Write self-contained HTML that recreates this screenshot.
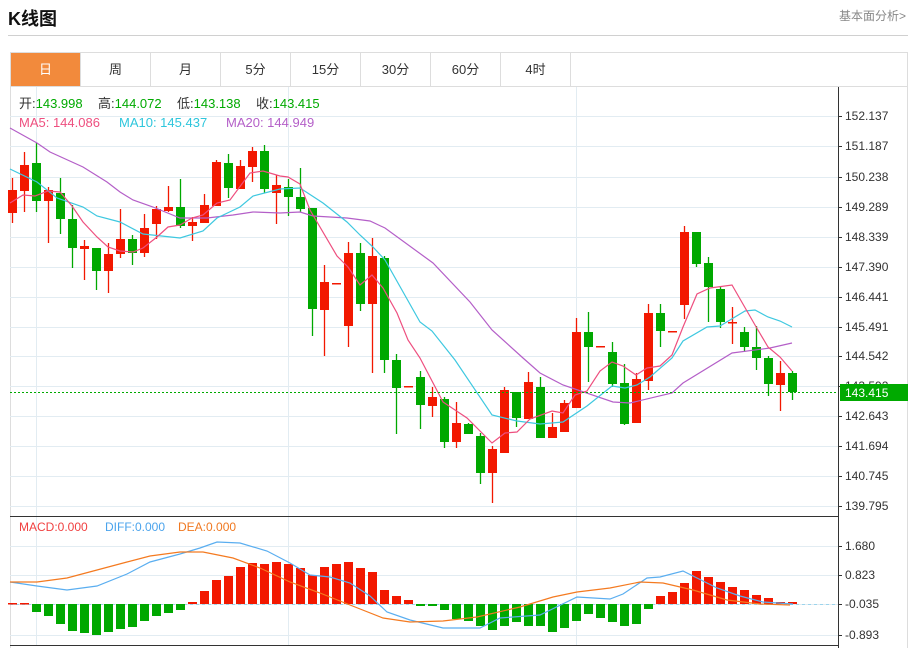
<!DOCTYPE html>
<html><head><meta charset="utf-8"><style>
body{margin:0;width:914px;height:648px;background:#fff;font-family:"Liberation Sans","Noto Sans CJK SC",sans-serif;overflow:hidden;position:relative}
.t{position:absolute;left:8px;top:5px;font-size:18px;font-weight:bold;color:#111}
.r{position:absolute;right:8px;top:7px;font-size:12px;color:#888}
.hr{position:absolute;left:8px;right:6px;top:35px;height:1px;background:#d0d0d0}
.tabs{position:absolute;left:10px;top:52px;width:898px;height:34px;border:1px solid #ddd;border-bottom:none;box-sizing:border-box}
.tab{position:absolute;top:0;height:34px;width:70px;border-right:1px solid #ddd;box-sizing:border-box;text-align:center;line-height:34px;font-size:13px;color:#333}
svg{position:absolute;left:0;top:0}
</style></head><body>
<div class="t">K线图</div><div class="r">基本面分析&gt;</div><div class="hr"></div>
<div class="tabs">
<div class="tab" style="left:0;background:#f28a3c;color:#fff">日</div>
<div class="tab" style="left:70px">周</div><div class="tab" style="left:140px">月</div>
<div class="tab" style="left:210px">5分</div><div class="tab" style="left:280px">15分</div>
<div class="tab" style="left:350px">30分</div><div class="tab" style="left:420px">60分</div>
<div class="tab" style="left:490px">4时</div>
</div>
<svg id="s" width="914" height="648" font-family="Liberation Sans, Noto Sans CJK SC, sans-serif">
<rect x="10.5" y="86.5" width="897" height="570" fill="none" stroke="#ddd"/>
<g id="grid" stroke="#e2ecf2" stroke-width="1"></g>
<line x1="838.5" y1="87" x2="838.5" y2="648" stroke="#333"/>
<line x1="10" y1="516.5" x2="838" y2="516.5" stroke="#333"/>
<line x1="10" y1="645.5" x2="838" y2="645.5" stroke="#333"/>
<g id="ax" font-size="12" fill="#333"></g>
<g id="c"></g>
<text x="19" y="108" font-size="13" fill="#333">开:<tspan fill="#0a0">143.998</tspan></text>
<text x="98" y="108" font-size="13" fill="#333">高:<tspan fill="#0a0">144.072</tspan></text>
<text x="177" y="108" font-size="13" fill="#333">低:<tspan fill="#0a0">143.138</tspan></text>
<text x="256" y="108" font-size="13" fill="#333">收:<tspan fill="#0a0">143.415</tspan></text>
<text x="19" y="127" font-size="13" fill="#ee4f7f">MA5: 144.086</text>
<text x="119" y="127" font-size="13" fill="#2ec6dc">MA10: 145.437</text>
<text x="226" y="127" font-size="13" fill="#b45fc8">MA20: 144.949</text>
<text x="19" y="531" font-size="12" fill="#f04040">MACD:0.000</text>
<text x="105" y="531" font-size="12" fill="#4aa3ec">DIFF:0.000</text>
<text x="178" y="531" font-size="12" fill="#f07820">DEA:0.000</text>
<line x1="10" y1="392.5" x2="838" y2="392.5" stroke="#0a0" stroke-dasharray="2,2"/>
<rect x="840" y="384" width="68" height="17" fill="#0a0"/>
<text x="845" y="397" font-size="12" fill="#fff">143.415</text>
</svg>
<script>
var NS="http://www.w3.org/2000/svg",g=document.getElementById('grid'),ax=document.getElementById('ax'),c=document.getElementById('c');
function el(p,t,a){var e=document.createElementNS(NS,t);for(var k in a)e.setAttribute(k,a[k]);p.appendChild(e);return e}
var ys=[116,146,177,207,237,267,297,327,356,386,416,446,476,506],lb=["152.137","151.187","150.238","149.289","148.339","147.390","146.441","145.491","144.542","143.592","142.643","141.694","140.745","139.795"];
ys.forEach(function(y,i){el(g,'line',{x1:10,x2:838,y1:y+.5,y2:y+.5});el(ax,'line',{x1:838,x2:842,y1:y+.5,y2:y+.5,stroke:'#333'});if(i!=9){var t=el(ax,'text',{x:845,y:y+4});t.textContent=lb[i]}});
var t9=el(ax,'text',{x:845,y:390});t9.textContent="143.592";
[[546,"1.680"],[575,"0.823"],[604,"-0.035"],[635,"-0.893"]].forEach(function(a){el(g,'line',{x1:10,x2:838,y1:a[0]+.5,y2:a[0]+.5});el(ax,'line',{x1:838,x2:842,y1:a[0]+.5,y2:a[0]+.5,stroke:'#333'});var t=el(ax,'text',{x:845,y:a[0]+4});t.textContent=a[1]});
[36,288,576].forEach(function(x){el(g,'line',{x1:x+.5,x2:x+.5,y1:87,y2:645})});
var R='#f21800',G='#00a800';
var K=[[190,213,178,223,R],[165,191,152,212,R],[163,201,143,212,G],[190,201,187,243,R],[193,219,178,234,G],[219,248,205,268,G],[246,249,240,280,R],[248,271,248,290,G],[254,271,243,293,R],[239,254,209,258,R],[239,253,235,265,G],[228,253,214,257,R],[209,224,206,239,R],[207,211,186,212,R],[207,226,179,228,G],[222,226,217,241,R],[205,223,194,223,R],[162,206,160,206,R],[163,188,154,198,G],[166,189,160,189,R],[151,167,147,182,R],[151,189,145,193,G],[185,193,175,224,R],[187,197,179,216,G],[197,209,168,212,G],[208,309,208,336,G],[282,310,265,356,R],[283,284,283,284,R],[253,326,242,347,R],[253,304,243,311,G],[256,304,238,373,R],[258,360,256,373,G],[360,388,354,434,G],[386,387,386,387,R],[377,405,371,429,G],[397,406,387,417,R],[399,442,397,448,G],[423,442,402,448,R],[424,434,423,434,G],[436,473,433,484,G],[449,473,446,503,R],[390,453,387,453,R],[392,418,392,427,G],[382,419,372,419,R],[387,438,377,438,G],[427,438,413,438,R],[403,432,400,432,R],[332,408,318,408,R],[332,347,312,382,G],[346,347,346,347,R],[352,384,342,387,G],[383,424,364,425,G],[379,423,373,423,R],[313,381,304,390,R],[313,331,304,347,G],[331,332,331,332,R],[232,305,226,319,R],[232,264,232,267,G],[263,287,257,322,G],[289,322,287,328,G],[322,323,307,344,R],[332,347,327,352,G],[347,358,326,370,G],[358,384,356,396,G],[373,385,361,411,R],[373,392,371,400,G]];
K.forEach(function(k,i){var x=12.5+12*i;el(c,'line',{x1:x,x2:x,y1:k[2],y2:k[3],stroke:k[4],'stroke-width':1.3});var h=Math.max(k[1]-k[0],1.5);el(c,'rect',{x:x-4.5,y:k[0],width:9,height:h,fill:k[4]})});
var M=[603,603,612,616,624,631,633,635,632,629,627,621,616,613,610,602,591,580,576,567,563,564,562,564,568,575,567,564,562,568,572,590,596,600,606,606,610,619,621,626,630,626,622,626,626,632,628,621,614,618,622,626,624,609,596,592,583,571,577,582,587,590,595,598,602,602];
el(c,'line',{x1:10,x2:838,y1:604.5,y2:604.5,stroke:'#9cd4ec','stroke-dasharray':'3,3'});
M.forEach(function(v,i){var x=12.5+12*i;var y0=Math.min(v,604),h=Math.max(Math.abs(v-604),1.5);el(c,'rect',{x:x-4.5,y:y0,width:9,height:h,fill:v<604?R:G})});
function pl(p,col){el(c,'polyline',{points:p,fill:'none',stroke:col,'stroke-width':1.2})}
pl("10,128 37,143 50,152 83,167 107,182 120,192 133,200 153,207 180,218 207,218 233,215 253,212 280,213 300,212 313,216 347,218 370,221 385,228 433,263 470,302 492,330 523,358 540,373 563,385 613,402 630,403 672,393 683,383 732,353 770,348 792,343","#b45fc8");
pl("10,169 37,182 57,198 83,207 97,216 120,222 143,234 180,238 203,231 217,218 240,207 253,196 280,189 300,188 323,203 347,222 360,235 373,247 385,260 420,322 432,331 455,360 492,415 517,421 540,424 563,422 587,406 612,386 625,388 637,385 650,377 672,358 683,341 707,327 720,326 745,311 755,310 768,317 780,321 792,327","#3ec8e0");
pl("10,203 23,195 35,196 48,191 60,192 72,206 83,222 97,237 108,247 120,251 133,252 143,248 157,237 168,227 180,225 192,218 203,215 217,203 230,200 250,173 263,171 280,176 288,177 300,184 310,210 337,256 348,267 360,285 372,275 383,288 397,313 408,340 420,358 443,402 467,418 492,443 505,433 517,432 530,419 552,411 563,413 575,395 587,391 600,371 612,362 623,366 636,375 647,368 660,366 672,355 683,327 697,294 710,288 732,285 755,325 768,347 780,357 792,371","#ee4f7f");
pl("10,582 37,586 67,590 97,586 127,574 150,562 180,554 200,548 217,542 240,543 267,551 290,563 310,575 330,577 350,583 370,596 387,612 410,620 443,628 480,628 500,618 540,615 577,597 610,599 623,594 647,578 660,577 683,571 697,578 717,588 740,596 763,602 793,604","#5aaef0");
pl("10,582 37,582 67,578 97,570 127,562 150,556 180,552 203,552 233,558 260,568 290,582 320,593 350,605 383,618 410,622 443,621 477,617 520,607 553,597 577,592 610,588 640,582 663,583 693,590 727,600 760,604 790,605","#f47a20");
</script>
</body></html>
